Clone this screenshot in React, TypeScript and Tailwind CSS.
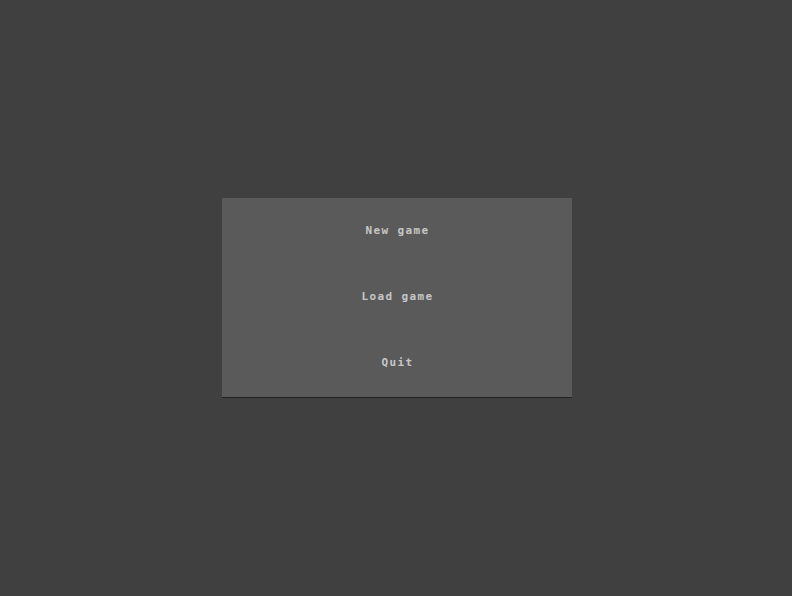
export default function App() {
  const items = ["New game", "Load game", "Quit"];
  return (
    <div className="w-[792px] h-[596px] bg-[#404040] flex flex-col">
      <div className="h-[198px]" />
      <div className="ml-[222px] w-[350px] bg-[#5a5a5a] border-b border-[#222222] flex flex-col pb-[1px]">
        {items.map((t) => (
          <div
            key={t}
            className="h-[66px] flex items-center justify-center text-[#c6c6c6] text-[11px] font-bold tracking-[1.4px] leading-none pl-[1px] pb-[2px]"
            style={{ fontFamily: '"DejaVu Sans Mono", monospace' }}
          >
            {t}
          </div>
        ))}
      </div>
    </div>
  );
}
